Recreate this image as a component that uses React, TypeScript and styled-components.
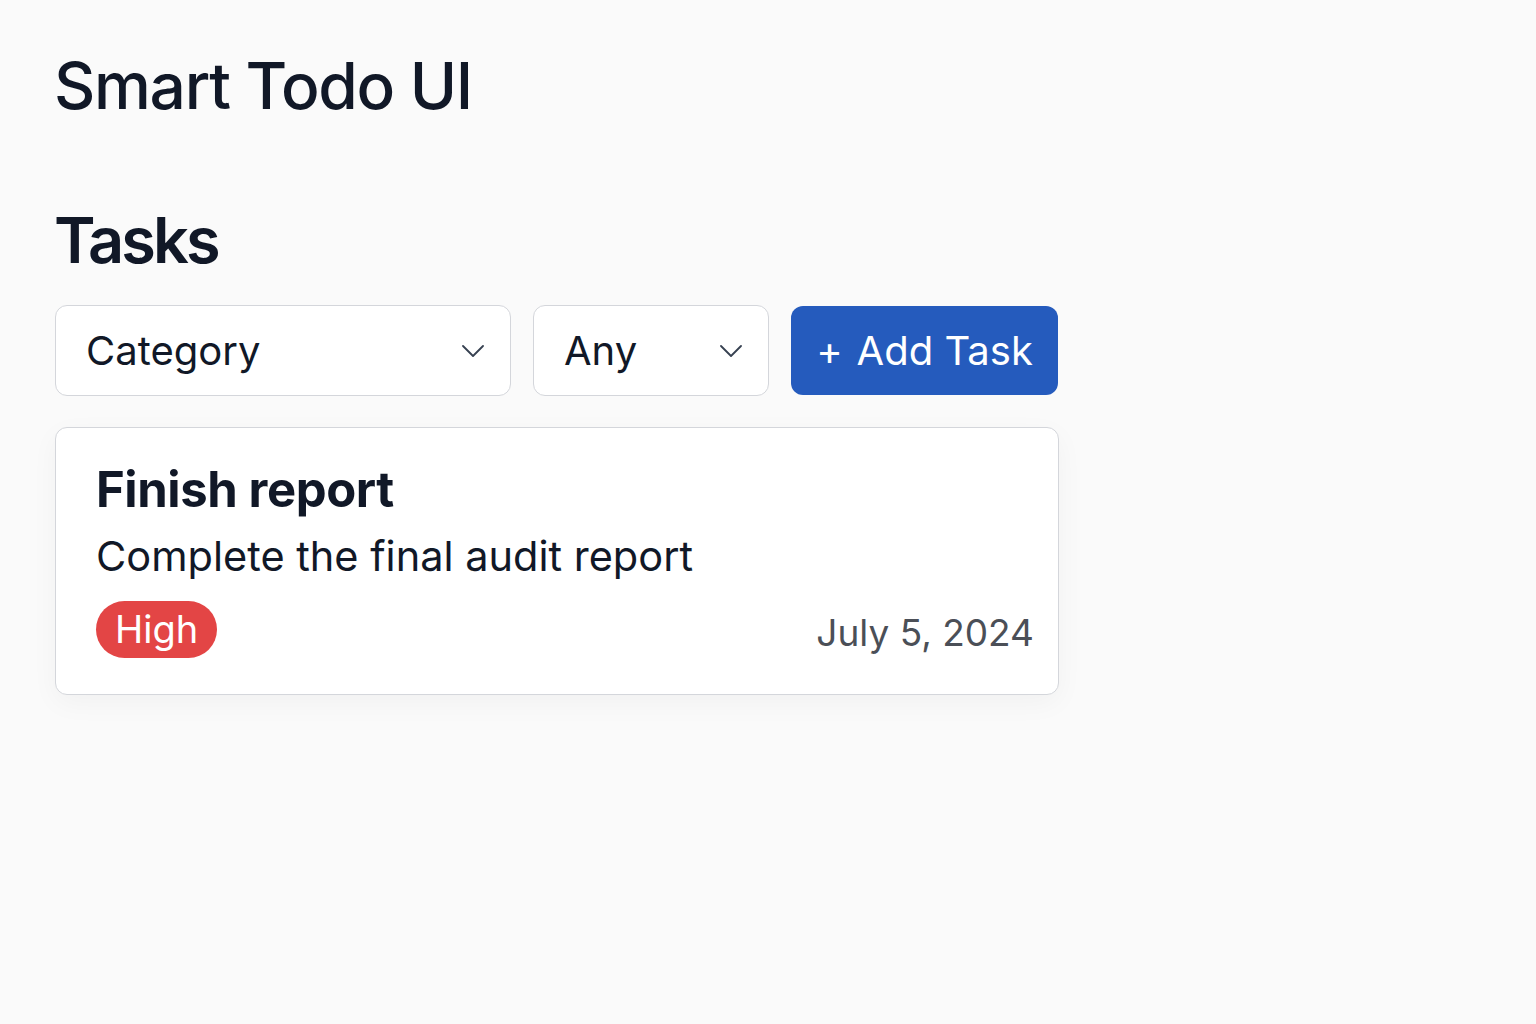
import React from "react";
import styled, { createGlobalStyle } from "styled-components";

const Global = createGlobalStyle`
  html, body {
    margin: 0;
    padding: 0;
    background: #fafafa;
    font-family: Inter, "Noto Sans", "Liberation Sans", sans-serif;
    color: #111827;
  }
`;

const Page = styled.main`
  min-height: 1024px;
  box-sizing: border-box;
  padding: 48px 0 0 54px;
`;

const Title = styled.h1`
  margin: 0;
  font-size: 64px;
  font-weight: 500;
  line-height: 1.2;
  letter-spacing: -1.3px;
  color: #111827;
`;

const SectionTitle = styled.h2`
  margin: 78px 0 0 0;
  font-size: 63px;
  font-weight: 600;
  line-height: 1.2;
  letter-spacing: -2.9px;
  color: #111827;
`;

const Toolbar = styled.div`
  display: flex;
  align-items: center;
  gap: 22px;
  margin-top: 27px;
  padding-left: 1px;
`;

const Select = styled.div<{ $w: number }>`
  box-sizing: border-box;
  flex: 0 0 auto;
  width: ${(p) => p.$w}px;
  height: 91px;
  display: flex;
  align-items: center;
  justify-content: space-between;
  padding: 0 26px 0 30px;
  background: #fff;
  border: 1.5px solid #d4d6db;
  border-radius: 12px;
  font-size: 40px;
  color: #111827;
`;

const AddButton = styled.button`
  box-sizing: border-box;
  flex: 0 0 auto;
  width: 267px;
  height: 89px;
  border: none;
  border-radius: 12px;
  background: #255bbd;
  color: #fff;
  font-family: inherit;
  font-size: 40px;
  font-weight: 400;
  display: flex;
  align-items: center;
  justify-content: center;
  gap: 14px;
  cursor: pointer;
`;

const Card = styled.section`
  box-sizing: border-box;
  width: 1004px;
  margin-top: 31px;
  margin-left: 1px;
  padding: 33px 24px 36px 40px;
  background: #fff;
  border: 1.5px solid #d4d6db;
  border-radius: 12px;
  box-shadow: 0 8px 28px rgba(0, 0, 0, 0.04);
`;

const CardTitle = styled.h3`
  margin: 0;
  font-size: 49px;
  font-weight: 700;
  line-height: 1.2;
  letter-spacing: -0.4px;
  color: #111827;
`;

const CardDesc = styled.p`
  margin: 12px 0 0;
  font-size: 41.5px;
  line-height: 1.2;
  color: #111827;
`;

const CardFooter = styled.div`
  margin-top: 19px;
  display: flex;
  align-items: center;
  justify-content: space-between;
`;

const Badge = styled.span`
  display: inline-flex;
  align-items: center;
  height: 57px;
  padding: 0 19px;
  border-radius: 29px;
  background: #e34545;
  color: #fff;
  font-size: 38px;
  line-height: 1;
`;

const DateText = styled.span`
  font-size: 37px;
  color: #4b4f57;
  margin-top: 6px;
`;

const Chevron = () => (
  <svg width="22" height="12" viewBox="0 0 22 12" fill="none">
    <path d="M1 1l10 10L21 1" stroke="#374151" strokeWidth="1.8" strokeLinecap="round" strokeLinejoin="round" />
  </svg>
);

export default function App() {
  return (
    <>
      <Global />
      <Page>
        <Title>Smart Todo UI</Title>
        <SectionTitle>Tasks</SectionTitle>
        <Toolbar>
          <Select $w={456}>
            <span>Category</span>
            <Chevron />
          </Select>
          <Select $w={236}>
            <span>Any</span>
            <Chevron />
          </Select>
          <AddButton>
            <span>+</span>
            <span>Add Task</span>
          </AddButton>
        </Toolbar>
        <Card>
          <CardTitle>Finish report</CardTitle>
          <CardDesc>Complete the final audit report</CardDesc>
          <CardFooter>
            <Badge>High</Badge>
            <DateText>July 5, 2024</DateText>
          </CardFooter>
        </Card>
      </Page>
    </>
  );
}
